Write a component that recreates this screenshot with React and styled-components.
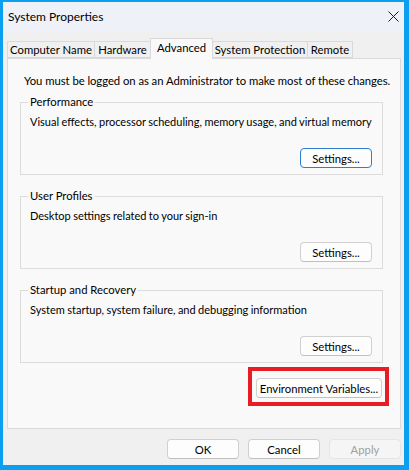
import React from "react";
import styled, { createGlobalStyle } from "styled-components";

const GlobalStyle = createGlobalStyle`
  * {
    margin: 0;
    padding: 0;
    box-sizing: border-box;
  }
  body {
    width: 409px;
    height: 470px;
    overflow: hidden;
    font-family: "Segoe UI", Lato, "Liberation Sans", sans-serif;
    font-size: 11.3px;
    color: #000;
  }
`;

const tabs = [
  { name: "Computer Name", width: 88 },
  { name: "Hardware", width: 57 },
  { name: "Advanced", width: 63, active: true },
  { name: "System Protection", width: 96 },
  { name: "Remote", width: 46 },
];

const groups = [
  {
    title: "Performance",
    text: "Visual effects, processor scheduling, memory usage, and virtual memory",
    focused: true,
  },
  { title: "User Profiles", text: "Desktop settings related to your sign-in" },
  {
    title: "Startup and Recovery",
    text: "System startup, system failure, and debugging information",
  },
];

function App() {
  return (
    <>
      <GlobalStyle />
      <Window>
        <TitleBar>
          <Title>System Properties</Title>
          <CloseButton>
            <svg width="11" height="11" viewBox="0 0 11 11">
              <path d="M0.5 0.5 L10.5 10.5 M10.5 0.5 L0.5 10.5" stroke="#1a1a1a" strokeWidth="1" />
            </svg>
          </CloseButton>
        </TitleBar>
        <Body>
          <TabStrip>
            {tabs.map((t) => (
              <Tab key={t.name} active={t.active} w={t.width}>
                {t.name}
              </Tab>
            ))}
          </TabStrip>
          <Panel>
            <Notice>You must be logged on as an Administrator to make most of these changes.</Notice>
            <Groups>
              {groups.map((g) => (
                <GroupBox key={g.title}>
                  <Legend>{g.title}</Legend>
                  <GroupText>{g.text}</GroupText>
                  <ButtonRow>
                    <Button focused={g.focused} w={72}>Settings...</Button>
                  </ButtonRow>
                </GroupBox>
              ))}
            </Groups>
            <EnvRow>
              <Highlight>
                <Button w={126}>Environment Variables...</Button>
              </Highlight>
            </EnvRow>
          </Panel>
          <Footer>
            <Button w={72}>OK</Button>
            <Button w={72}>Cancel</Button>
            <Button w={72} disabled>Apply</Button>
          </Footer>
        </Body>
      </Window>
    </>
  );
}

export default App;

const Window = styled.div`
  width: 409px;
  height: 470px;
  border-style: solid;
  border-color: #0a9ff0;
  border-width: 2px 5px 5px 3px;
  display: flex;
  flex-direction: column;
  background: #f0f0f0;
`;

const TitleBar = styled.div`
  height: 29px;
  flex-shrink: 0;
  background: #eef2f8;
  display: flex;
  align-items: center;
  justify-content: space-between;
  padding: 0 0 0 5px;
`;

const Title = styled.div`
  font-size: 12px;
  color: #000;
`;

const CloseButton = styled.div`
  width: 22px;
  height: 29px;
  display: flex;
  align-items: center;
  justify-content: center;
`;

const Body = styled.div`
  flex: 1;
  display: flex;
  flex-direction: column;
  padding: 7px 3px 0 4px;
`;

const TabStrip = styled.div`
  display: flex;
  align-items: flex-end;
  height: 20px;
  flex-shrink: 0;
  position: relative;
  z-index: 1;
`;

const Tab = styled.div`
  width: ${({ w }) => w}px;
  height: ${({ active }) => (active ? "21px" : "17px")};
  margin-bottom: ${({ active }) => (active ? "-1px" : "0")};
  background: ${({ active }) => (active ? "#f9f9f9" : "#f0f0f0")};
  border: 1px solid #d9d9d9;
  border-bottom: ${({ active }) => (active ? "none" : "1px solid #d9d9d9")};
  margin-left: -1px;
  display: flex;
  align-items: ${({ active }) => (active ? "flex-start" : "center")};
  padding-top: ${({ active }) => (active ? "2px" : "0")};
  justify-content: center;
  white-space: nowrap;
  &:first-child {
    margin-left: 0;
  }
`;

const Panel = styled.div`
  height: 371px;
  flex-shrink: 0;
  background: #f9f9f9;
  border: 1px solid #dadada;
  display: flex;
  flex-direction: column;
  padding: 14px 17px 0 12px;
`;

const Notice = styled.div`
  line-height: 15px;
  padding-left: 4px;
  white-space: nowrap;
  letter-spacing: -0.05px;
`;

const Groups = styled.div`
  display: flex;
  flex-direction: column;
  gap: 14px;
  margin-top: 7px;
`;

const GroupBox = styled.fieldset`
  height: 80px;
  border: 1px solid #dcdcdc;
  padding: 0 10px 0 9px;
  min-width: 0;
`;

const Legend = styled.legend`
  padding: 0 2px;
  margin-left: -2px;
  line-height: 14px;
`;

const GroupText = styled.div`
  line-height: 15px;
  margin-top: 5px;
  font-size: 11px;
  word-spacing: -0.4px;
  white-space: nowrap;
`;

const ButtonRow = styled.div`
  display: flex;
  justify-content: flex-end;
  margin-top: 19px;
`;

const Button = styled.button`
  width: ${({ w }) => w}px;
  height: 20px;
  font-family: inherit;
  font-size: 11.3px;
  color: ${({ disabled }) => (disabled ? "#a0a0a0" : "#000")};
  background: ${({ disabled }) => (disabled ? "#f5f5f5" : "#fdfdfd")};
  border: 1px solid
    ${({ focused, disabled }) => (focused ? "#2f7fd0" : disabled ? "#e5e5e5" : "#d0d0d0")};
  border-bottom-color: ${({ focused, disabled }) =>
    focused ? "#2f7fd0" : disabled ? "#e5e5e5" : "#c0c0c0"};
  border-radius: 4px;
  display: flex;
  align-items: center;
  justify-content: center;
  white-space: nowrap;
`;

const EnvRow = styled.div`
  display: flex;
  justify-content: flex-end;
  margin-top: 4px;
  margin-right: -6px;
`;

const Highlight = styled.div`
  border: 4px solid #e81c24;
  padding: 7px 3px 4px 4px;
`;

const Footer = styled.div`
  display: flex;
  justify-content: flex-end;
  gap: 9px;
  padding-top: 10px;
`;
